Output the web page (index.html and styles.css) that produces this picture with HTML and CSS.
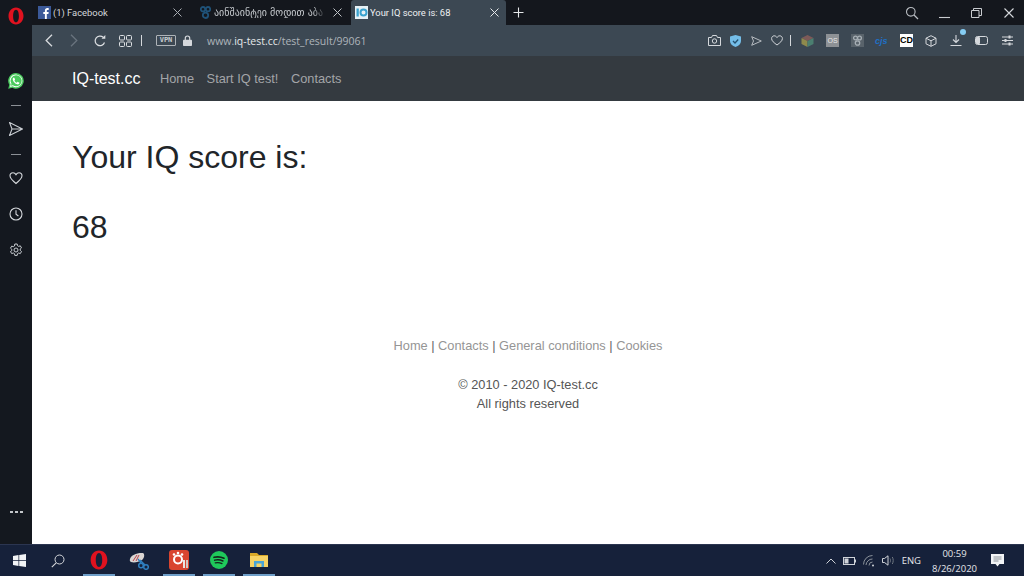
FILE: index.html
```html
<!DOCTYPE html>
<html lang="en">
<head>
<meta charset="utf-8">
<title>Your IQ score is: 68</title>
<link rel="stylesheet" href="styles.css">
</head>
<body>
<div class="screen">
  <div class="main">
    <aside class="sidebar">
      <svg class="opera" width="16" height="18" viewBox="0 0 16 18"><path fill="#e0121f" fill-rule="evenodd" d="M8 .5C3.600.5.500 4.200.500 9s3.100 8.500 7.500 8.500 7.500-3.700 7.500-8.500S12.400.5 8 .5zm0 2.200c1.900 0 2.900 2.900 2.900 6.300s-1 6.300-2.900 6.300S5.100 12.400 5.100 9 6.100 2.700 8 2.700z"/></svg>
      <svg class="whatsapp" width="18" height="18" viewBox="0 0 18 18"><path fill="#4ccb5f" d="M9 1a7.800 7.800 0 0 0-6.700 11.800L1.200 16.800l4.100-1.100A7.800 7.800 0 1 0 9 1z"/><path fill="#fff" d="M9 2.500a6.300 6.300 0 0 0-5.300 9.700l-.7 2.700 2.700-.7A6.300 6.300 0 1 0 9 2.500z"/><path fill="#4ccb5f" d="M9 3.300a5.500 5.500 0 0 0-4.600 8.500l-.4 1.900 1.900-.5A5.500 5.500 0 1 0 9 3.300z"/><path fill="#fff" d="M6.800 5.500c-.8.300-1.200 1.200-1 2.200.4 2 2.300 4 4.400 4.600 1 .3 1.900-.2 2.200-1 .1-.4 0-.6-.3-.8l-1.200-.6c-.3-.1-.5 0-.7.300l-.4.500c-1-.4-1.900-1.200-2.400-2.300l.5-.5c.2-.2.200-.4.100-.6l-.6-1.200c-.1-.2-.3-.3-.6-.2z"/></svg>
      <span class="side-rule"></span>
      <svg class="side-icon send" width="16" height="16" viewBox="0 0 16 16"><path fill="none" stroke="#c9cdd2" stroke-width="1.100" stroke-linejoin="round" d="M1.500 1.500 14.500 8 1.500 14.500 4 8zM4 8h10.500"/></svg>
      <span class="side-rule"></span>
      <svg class="side-icon heart" width="14" height="14" viewBox="0 0 14 14"><path fill="none" stroke="#d5d8dc" stroke-width="1.100" d="M7 12.500C3.500 9.700 1 7.600 1 4.800 1 3 2.400 1.700 4 1.700c1.300 0 2.300.7 3 1.900.7-1.200 1.700-1.900 3-1.900 1.600 0 3 1.300 3 3.100 0 2.800-2.500 4.900-6 7.700z"/></svg>
      <svg class="side-icon clock" width="14" height="14" viewBox="0 0 14 14"><circle cx="7" cy="7" r="6" fill="none" stroke="#d5d8dc" stroke-width="1.100"/><path fill="none" stroke="#d5d8dc" stroke-width="1.100" d="M7 3.300V7.300L9.400 9"/></svg>
      <svg class="side-icon gear" width="14" height="14" viewBox="0 0 14 14"><path fill="none" stroke="#c9cdd2" stroke-width="1" stroke-linejoin="round" d="M5.800 1h2.400l.3 1.700 1.200.7 1.600-.6 1.200 2.100-1.300 1.100v1.400l1.300 1.100-1.200 2.100-1.600-.6-1.200.7-.3 1.700H5.800l-.3-1.700-1.200-.7-1.600.6-1.200-2.100L2.800 7.700V6.300L1.500 5.200l1.200-2.100 1.600.6 1.200-.7z"/><circle cx="7" cy="7" r="2" fill="none" stroke="#c9cdd2"/></svg>
      <span class="side-more"><i></i><i></i><i></i></span>
    </aside>
    <div class="browser">
      <div class="tabstrip">
        <div class="tab tab-first">
          <svg class="favicon" width="13" height="13" viewBox="0 0 13 13"><rect width="13" height="13" fill="#3b5998"/><path fill="#fff" d="M8.800 13V8h1.600l.3-2H8.800V4.800c0-.6.200-.9.900-.9h1V2.100c-.3 0-.8-.1-1.400-.1C7.900 2 6.900 2.900 6.900 4.500V6H5.300v2h1.600v5z"/></svg>
          <span class="tab-title">(1) Facebook</span>
          <svg class="tab-x" width="9" height="9" viewBox="0 0 9 9"><path stroke="#a8adb3" d="M.5.500l8 8M8.500.500l-8 8"/></svg>
        </div>
        <div class="tab tab-second">
          <svg class="favicon fav-geo" width="11" height="13" viewBox="0 0 11 13"><circle cx="3" cy="3.200" r="2.200" fill="none" stroke="#1f5278" stroke-width="1.800"/><circle cx="8" cy="3.200" r="2.200" fill="none" stroke="#1f5278" stroke-width="1.800"/><circle cx="5.500" cy="9.300" r="2.700" fill="none" stroke="#1f5278" stroke-width="1.800"/></svg>
          <span class="tab-title geo">აინშაინტეი მოდით აბა</span>
          <svg class="tab-x" width="9" height="9" viewBox="0 0 9 9"><path stroke="#c0c4c8" d="M.5.500l8 8M8.500.500l-8 8"/></svg>
        </div>
        <div class="tab tab-active">
          <svg class="favicon" width="13" height="13" viewBox="0 0 13 13"><rect width="13" height="13" fill="#e6f1f6"/><rect x="1.500" y="2.500" width="2.300" height="8" fill="#3aa3cf"/><circle cx="8.500" cy="6.500" r="3" fill="none" stroke="#3aa3cf" stroke-width="2"/></svg>
          <span class="tab-title active-title">Your IQ score is: 68</span>
          <svg class="tab-x" width="9" height="9" viewBox="0 0 9 9"><path stroke="#e6e8ea" d="M.5.500l8 8M8.500.500l-8 8"/></svg>
        </div>
        <svg class="plus" width="11" height="11" viewBox="0 0 11 11"><path stroke="#e6e8ea" stroke-width="1.100" d="M5.500.5v10M.5 5.500h10"/></svg>
        <div class="win-controls">
          <svg width="14" height="14" viewBox="0 0 14 14"><circle cx="5.800" cy="5.800" r="4.300" fill="none" stroke="#b9bdc2" stroke-width="1.100"/><path stroke="#b9bdc2" stroke-width="1.300" d="M9 9l4 4"/></svg>
          <svg class="win-min" width="11" height="3" viewBox="0 0 11 3"><path stroke="#c9ccd0" stroke-width="1.100" d="M0 1.500h11"/></svg>
          <svg class="win-max" width="11" height="10" viewBox="0 0 11 10"><path fill="none" stroke="#c9ccd0" d="M.5 2.500h7.500v7H.5zM2.500 2.500V.5h8v7H8"/></svg>
          <svg class="win-close" width="10" height="10" viewBox="0 0 10 10"><path stroke="#d5d8dc" stroke-width="1.100" d="M.5.500l9 9M9.500.500l-9 9"/></svg>
        </div>
      </div>
      <div class="addressbar">
        <svg class="nav-back" width="8" height="13" viewBox="0 0 8 13"><path fill="none" stroke="#d8dbde" stroke-width="1.300" d="M7 .8 1.200 6.500 7 12.200"/></svg>
        <svg class="nav-fwd" width="8" height="13" viewBox="0 0 8 13"><path fill="none" stroke="#69747e" stroke-width="1.300" d="M1 .8l5.800 5.700L1 12.200"/></svg>
        <svg class="nav-reload" width="12" height="12" viewBox="0 0 12 12"><path fill="none" stroke="#dcdfe2" stroke-width="1.200" d="M10.500 7.500A4.800 4.800 0 1 1 9.200 2.300"/><path fill="#dcdfe2" d="M7.500 3.800h3.800V0z"/></svg>
        <svg class="nav-grid" width="13" height="12" viewBox="0 0 13 12"><g fill="none" stroke="#dcdfe2"><rect x=".5" y=".5" width="5" height="4.500" rx="1"/><rect x="7.500" y=".5" width="5" height="4.500" rx="1"/><rect x=".5" y="7" width="5" height="4.500" rx="1"/><rect x="7.500" y="7" width="5" height="4.500" rx="1"/></g></svg>
        <span class="bar-rule"></span>
        <span class="vpn">VPN</span>
        <svg class="lock" width="9" height="11" viewBox="0 0 9 11"><path fill="none" stroke="#d5d8dc" stroke-width="1.200" d="M2.300 5V3.200a2.200 2.200 0 0 1 4.400 0V5"/><rect y="4.800" width="9" height="6.200" rx=".8" fill="#d5d8dc"/></svg>
        <span class="url">www.<b>iq-test.cc</b>/test_result/99061</span>
        <div class="extensions">
          <svg width="13" height="11" viewBox="0 0 13 11"><path fill="none" stroke="#d5d8dc" d="M.5 2.500h3l1-2h4l1 2h3v8H.5z"/><circle cx="6.500" cy="6" r="2.200" fill="none" stroke="#d5d8dc"/></svg>
          <svg class="ext-shield" width="11" height="12" viewBox="0 0 11 12"><path fill="#74bde8" d="M5.500 0 11 1.500V6c0 3-2.400 5-5.500 6C2.400 11 0 9 0 6V1.500z"/><path fill="none" stroke="#24506f" stroke-width="1.300" d="M3 6l2 2 3.200-3.500"/></svg>
          <svg class="ext-send" width="11" height="10" viewBox="0 0 11 10"><path fill="none" stroke="#b7bcc1" stroke-linejoin="round" d="M.7.700 10.300 5 .7 9.300 2.500 5z"/></svg>
          <svg class="ext-heart" width="12" height="11" viewBox="0 0 12 11"><path fill="none" stroke="#d5d8dc" d="M6 10C3 7.700.6 6 .6 3.500.6 2 1.800.8 3.200.8 4.400.8 5.400 1.500 6 2.500 6.600 1.500 7.600.8 8.800.8 10.200.8 11.400 2 11.400 3.500 11.400 6 9 7.700 6 10z"/></svg>
          <span class="bar-rule ext-rule"></span>
          <svg class="ext-cube" width="13" height="12" viewBox="0 0 12 12"><path fill="#7d5a58" d="M6 0 12 3 6 6 0 3z"/><path fill="#8f8a4c" d="M0 3 6 6v6L0 9z"/><path fill="#4b7f70" d="M12 3 6 6v6l6-3z"/></svg>
          <span class="ext-box ext-os">OS</span>
          <svg class="ext-gray" width="13" height="13" viewBox="0 0 13 13"><rect width="13" height="13" fill="#59636b"/><circle cx="4.500" cy="4" r="1.900" fill="none" stroke="#a8b0b6" stroke-width="1.300"/><circle cx="8.500" cy="4" r="1.900" fill="none" stroke="#a8b0b6" stroke-width="1.300"/><circle cx="6.500" cy="9" r="2.200" fill="none" stroke="#a8b0b6" stroke-width="1.300"/></svg>
          <span class="ext-cjs">cjs</span>
          <span class="ext-box ext-cd">CD</span>
          <svg class="ext-box3d" width="12" height="12" viewBox="0 0 12 12"><path fill="none" stroke="#d5d8dc" stroke-linejoin="round" d="M6 .7 11 3.200V8.800L6 11.300 1 8.800V3.200zM1 3.200 6 5.800 11 3.200M6 5.800v5.500"/></svg>
          <span class="ext-download">
            <svg width="12" height="11" viewBox="0 0 12 11"><path fill="none" stroke="#d5d8dc" stroke-width="1.100" d="M6 0v7M3 4.500 6 7.500 9 4.500M.5 10.500h11"/></svg>
            <i class="ext-dot"></i>
          </span>
          <svg class="ext-battery" width="13" height="9" viewBox="0 0 13 9"><rect x=".5" y=".5" width="12" height="8" rx="2" fill="none" stroke="#d5d8dc"/><rect x="1" y="1" width="4" height="7" rx="1" fill="#d5d8dc"/></svg>
          <svg class="ext-sliders" width="11" height="11" viewBox="0 0 11 11"><path stroke="#d5d8dc" d="M0 2h11M0 5.500h11M0 9h11"/><path stroke="#d5d8dc" stroke-width="2" d="M7.500.5v3M3.500 4v3M7.500 7.500v3"/></svg>
        </div>
      </div>
      <nav class="sitenav">
        <a class="brand">IQ-test.cc</a>
        <a class="navlink">Home</a>
        <a class="navlink">Start IQ test!</a>
        <a class="navlink">Contacts</a>
      </nav>
      <main class="content">
        <h1 class="heading">Your IQ score is:</h1>
        <p class="score">68</p>
        <footer class="foot">
          <p class="foot-links"><a>Home</a> | <a>Contacts</a> | <a>General conditions</a> | <a>Cookies</a></p>
          <p class="foot-copy">© 2010 - 2020 IQ-test.cc<br>All rights reserved</p>
        </footer>
      </main>
    </div>
  </div>
  <div class="taskbar">
    <svg class="tb-win" width="13" height="13" viewBox="0 0 13 13"><path fill="#f2f4f6" d="M0 1.900 5.500 1.100V6.200H0zM6.200 1 13 0V6.200H6.200zM0 6.900H5.500V11.900L0 11.100zM6.200 6.900H13V13L6.200 12z"/></svg>
    <svg class="tb-search" width="14" height="14" viewBox="0 0 14 14"><circle cx="8.500" cy="5.500" r="4.500" fill="none" stroke="#d5d8dc"/><path stroke="#d5d8dc" stroke-width="1.100" d="M5.200 8.800.8 13.200"/></svg>
    <span class="tb-app tb-on">
      <svg width="18" height="20" viewBox="0 0 16 18"><path fill="#e0121f" fill-rule="evenodd" d="M8 .5C3.600.5.500 4.200.500 9s3.100 8.500 7.500 8.500 7.500-3.700 7.500-8.500S12.400.5 8 .5zm0 2.200c1.900 0 2.900 2.900 2.900 6.300s-1 6.300-2.900 6.300S5.100 12.400 5.100 9 6.100 2.700 8 2.700z"/></svg>
    </span>
    <span class="tb-app">
      <svg width="20" height="18" viewBox="0 0 20 18"><path fill="#d9d5d3" d="M1 7C2 3 8 .5 14 1c2 1 1.500 5-1 7-3 2-8 3-11 2-1-.5-1.500-1.500-1-3z"/><path stroke="#b8434a" stroke-width="1" d="M4 9 8 3M7 9l3-6"/><circle cx="12" cy="13.500" r="2.300" fill="none" stroke="#2f7fbf" stroke-width="1.500"/><circle cx="17" cy="15" r="2.300" fill="none" stroke="#2f7fbf" stroke-width="1.500"/><path stroke="#2f7fbf" stroke-width="1.300" d="M12 11 9 7M16 13 11 8"/></svg>
    </span>
    <span class="tb-app tb-on">
      <svg width="20" height="20" viewBox="0 0 20 20"><rect width="20" height="20" rx="3" fill="#d9452f"/><circle cx="9" cy="9.500" r="4" fill="none" stroke="#fff" stroke-width="2"/><circle cx="5" cy="4.500" r="1.300" fill="#fff"/><circle cx="9" cy="3" r="1.300" fill="#fff"/><circle cx="13" cy="4.500" r="1.300" fill="#fff"/><rect x="14" y="10" width="2" height="8" fill="#e9e4df"/><rect x="17" y="10" width="2" height="8" fill="#cfc8c2"/></svg>
    </span>
    <span class="tb-app tb-on">
      <svg width="18" height="18" viewBox="0 0 18 18"><circle cx="9" cy="9" r="9" fill="#1fc95b"/><g fill="none" stroke="#14241b" stroke-linecap="round"><path stroke-width="1.700" d="M4 6.300c3.300-.9 6.800-.6 10 .9"/><path stroke-width="1.400" d="M4.600 9.200c2.800-.8 5.700-.5 8.400.8"/><path stroke-width="1.200" d="M5.200 11.900c2.300-.6 4.600-.4 6.800.7"/></g></svg>
    </span>
    <span class="tb-app tb-on">
      <svg width="18" height="16" viewBox="0 0 18 16"><path fill="#d9a928" d="M0 1h7l2 2h9v12H0z"/><path fill="#f6d365" d="M0 4h18v11H0z"/><rect x="4" y="9" width="10" height="6" fill="#4aa5d8"/><rect x="6.500" y="11.500" width="5" height="3.500" fill="#f6d365"/></svg>
    </span>
    <div class="tray">
      <svg width="10" height="6" viewBox="0 0 10 6"><path fill="none" stroke="#cfd3d8" d="M.5 5.500 5 1l4.500 4.500"/></svg>
      <svg class="tray-batt" width="13" height="8" viewBox="0 0 13 8"><rect x=".5" y=".5" width="11" height="7" fill="none" stroke="#cfd3d8"/><rect x="1.500" y="1.500" width="4" height="5" fill="#cfd3d8"/><rect x="12" y="2.500" width="1" height="3" fill="#cfd3d8"/></svg>
      <svg class="tray-wifi" width="12" height="12" viewBox="0 0 12 12"><g fill="none" stroke="#8b929b"><path d="M.5 9.500A9 9 0 0 1 9.500.5"/><path d="M3 10A6.500 6.500 0 0 1 9.500 4"/><path d="M6 10.500A3.500 3.500 0 0 1 9.500 7"/></g><circle cx="10" cy="10.500" r="1" fill="#cfd3d8"/></svg>
      <svg class="tray-vol" width="13" height="11" viewBox="0 0 13 11"><path fill="none" stroke="#cfd3d8" d="M.5 3.500h2L6 .8v9.400L2.500 7.500h-2z"/><path fill="none" stroke="#6f7781" d="M8 3.500c.7 1.200.7 2.800 0 4M10.300 2c1.200 2 1.200 5 0 7"/></svg>
      <span class="tray-lang">ENG</span>
      <span class="tray-clock">00:59<br>8/26/2020</span>
      <svg class="tray-note" width="13" height="13" viewBox="0 0 13 13"><path fill="#f2f4f6" d="M0 0h13v10H8.500L6.500 12.500 4.500 10H0z"/><path stroke="#8d939a" d="M2.500 3h8M2.500 5h8M2.500 7h5"/></svg>
    </div>
  </div>
</div>
</body>
</html>
```

FILE: styles.css
```css
* { box-sizing: border-box; }
html, body { margin: 0; padding: 0; }
body { width: 1024px; height: 576px; overflow: hidden; font-family: "Liberation Sans", Arial, sans-serif; background: #fff; }
svg { display: block; flex: none; }
.screen { display: flex; flex-direction: column; height: 576px; }
.main { display: flex; height: 544px; }

.sidebar { width: 32px; flex: none; background: #14181f; display: flex; flex-direction: column; align-items: center; position: relative; }
.opera { margin-top: 7px; }
.whatsapp { margin-top: 47px; }
.side-rule { width: 10px; height: 1px; background: #8c9096; }
.whatsapp + .side-rule { margin-top: 15px; }
.send { margin-top: 15px; }
.send + .side-rule { margin-top: 17px; }
.heart { margin-top: 16px; }
.clock { margin-top: 22px; }
.gear { margin-top: 22px; }
.side-more { margin-top: auto; margin-bottom: 31px; display: flex; gap: 2px; }
.side-more i { width: 3px; height: 2px; background: #c3c6ca; display: block; }

.browser { flex: 1; min-width: 0; display: flex; flex-direction: column; }
.tabstrip { height: 25px; background: #14171d; display: flex; align-items: stretch; color: #d5d8dc; font: 9.400px Roboto, "DejaVu Sans", sans-serif; }
.tab { display: flex; align-items: center; width: 155px; flex: none; padding-left: 6px; padding-right: 12px; }
.tab-first { width: 162px; }
.tab-second { width: 157px; padding-left: 6px; padding-right: 9px; }
.tab-active { width: 155px; background: #3c4853; border-radius: 3px 3px 0 0; color: #eef0f2; padding-left: 4px; padding-right: 7px; }
.tab-title { margin-left: 2px; flex: 1; white-space: nowrap; overflow: hidden; }
.fav-geo { margin-right: 1px; }
.geo { font: 10px "DejaVu Sans", sans-serif; color: #c4c8cc; margin-right: 7px; -webkit-mask-image: linear-gradient(to right, #000 88%, transparent); mask-image: linear-gradient(to right, #000 88%, transparent); }
.plus { align-self: center; margin-left: 7px; }
.win-controls { margin-left: auto; display: flex; align-items: center; padding-right: 10px; }
.win-min { margin-left: 20px; margin-top: 9px; }
.win-max { margin-left: 21px; }
.win-close { margin-left: 22px; }

.addressbar { height: 31px; background: #3c4853; display: flex; align-items: center; padding-left: 13px; color: #c7cbd0; }
.nav-fwd { margin-left: 17px; }
.nav-reload { margin-left: 16px; }
.nav-grid { margin-left: 13px; }
.bar-rule { width: 1px; height: 11px; background: #d5d8dc; margin-left: 9px; }
.vpn { margin-left: 14px; width: 20px; height: 11px; border: 1px solid #aeb3b8; border-radius: 1px; font: bold 7px/9px "DejaVu Sans Mono", monospace; text-align: center; color: #c8ccd0; }
.lock { margin-left: 7px; }
.url { margin-left: 15px; font: 10.500px "Open Sans", sans-serif; color: #aeb4ba; white-space: nowrap; }
.url b { font-weight: 400; color: #e6e8ea; }
.extensions { margin-left: auto; display: flex; align-items: center; padding-right: 11px; }
.ext-shield { margin-left: 9px; }
.ext-send { margin-left: 10px; }
.ext-heart { margin-left: 9px; }
.ext-rule { margin-left: 7px; }
.ext-cube { margin-left: 10px; }
.ext-box { width: 13px; height: 13px; font-size: 7px; line-height: 13px; text-align: center; flex: none; }
.ext-os { margin-left: 12px; background: #8d9195; color: #e8e8e8; }
.ext-gray { margin-left: 12px; }
.ext-cjs { margin-left: 11px; width: 14px; font: italic bold 9px "Liberation Sans", sans-serif; color: #1f6fc4; }
.ext-cd { margin-left: 11px; background: #fff; color: #000; font-weight: bold; font-size: 9px; }
.ext-box3d { margin-left: 12px; }
.ext-download { margin-left: 13px; position: relative; display: block; }
.ext-dot { position: absolute; right: -4px; top: -6px; width: 6px; height: 6px; border-radius: 50%; background: #86cdf3; }
.ext-battery { margin-left: 13px; }
.ext-sliders { margin-left: 14px; }

.sitenav { height: 45px; background: #343a40; display: flex; align-items: center; padding-left: 40px; }
.brand { color: #fff; font-size: 16px; margin-right: 19.500px; }
.navlink { color: #a3a5a8; font-size: 12.800px; margin-right: 12.500px; }

.content { flex: 1; background: #fff; padding: 37px 40px 0; color: #212529; }
.heading { margin: 0; font-size: 32px; font-weight: 400; line-height: 38px; }
.score { margin: 32px 0 0; font-size: 32px; line-height: 38px; }
.foot { margin-top: 90px; text-align: center; font-size: 12.800px; line-height: 19px; color: #555; }
.foot p { margin: 0; }
.foot-links { color: #5f6368; }
.foot-links a { color: #959595; }
.foot-copy { margin-top: 20px !important; }

.taskbar { height: 32px; background: #16213a; border-top: 1px solid #2b3550; display: flex; align-items: center; padding-left: 13px; position: relative; }
.tb-search { margin-left: 25px; }
.tb-app { width: 32px; height: 31px; margin-right: 8px; display: flex; align-items: center; justify-content: center; flex: none; }
.tb-search + .tb-app { margin-left: 18px; }
.tb-on { border-bottom: 2px solid #6f9fc9; }
.tray { margin-left: auto; display: flex; align-items: center; padding-right: 20px; color: #e4e6ea; font: 9.500px "Open Sans", sans-serif; }
.tray-batt { margin-left: 7px; }
.tray-wifi { margin-left: 7px; }
.tray-vol { margin-left: 7px; }
.tray-lang { margin-left: 7px; }
.tray-clock { margin-left: 11px; text-align: center; line-height: 15px; }
.tray-note { margin-left: 14px; }
```
